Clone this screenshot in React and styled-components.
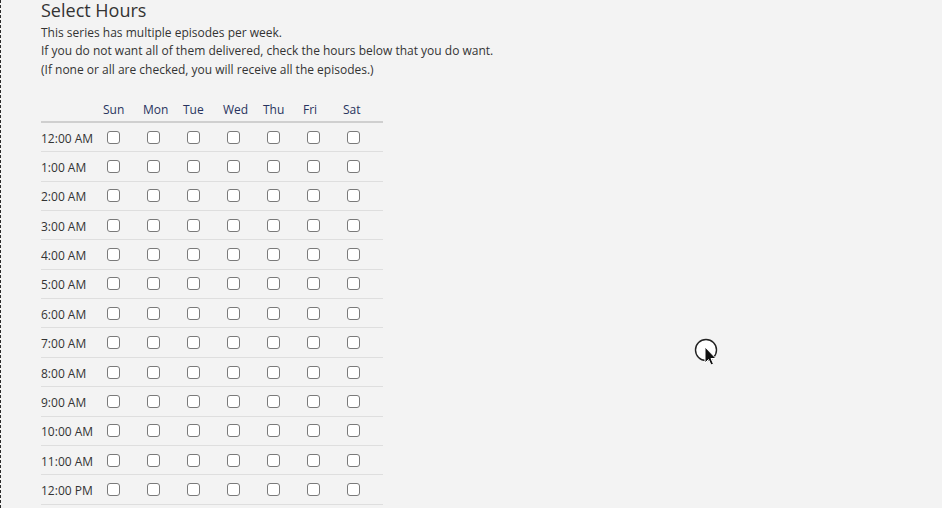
import styled, { createGlobalStyle } from "styled-components";

const GlobalStyle = createGlobalStyle`
    html, body {
        margin: 0;
        padding: 0;
        height: 100%;
        overflow: hidden;
        background: #f3f3f3;
    }
    body {
        font-family: "Open Sans", "Noto Sans", sans-serif;
        color: #333;
    }
`;

const Page = styled.div`
    position: relative;
    height: 508px;
    box-sizing: border-box;
    border-left: 1px dashed #2a2a2a;
    padding: 0 0 0 40px;
    overflow: hidden;
`;

const Title = styled.h2`
    margin: 0;
    font-size: 18px;
    font-weight: 400;
    line-height: 21px;
    color: #333;
`;

const Intro = styled.div`
    margin-top: 3px;
    font-size: 12px;
    line-height: 18.4px;
    color: #333;

    & p {
        margin: 0;
    }
`;

const Table = styled.table`
    margin-top: 15px;
    border-collapse: collapse;
    font-size: 12px;
`;

const HeadCell = styled.th`
    width: ${ ( p ) => p.$w }px;
    height: 24px;
    padding: 3px 0 0;
    text-align: left;
    font-weight: 400;
    color: #28335e;
    border-bottom: 2px solid #cfcfcf;
    vertical-align: middle;
`;

const Row = styled.tr`
    height: 29.4px;
    border-bottom: 1px solid #dedede;
`;

const TimeCell = styled.td`
    padding: 0;
    padding-top: 2px;
    white-space: nowrap;
    color: #333;
`;

const BoxCell = styled.td`
    padding: 0;
`;

const Box = styled.input.attrs( { type: "checkbox" } )`
    appearance: none;
    display: block;
    width: 13px;
    height: 13px;
    margin: 0 0 0 4px;
    box-sizing: border-box;
    border: 1px solid #7a7a7a;
    border-radius: 3px;
    background: #fff;
`;

const Cursor = styled.svg`
    position: absolute;
    left: 693px;
    top: 338px;
`;

const days = [ "Sun", "Mon", "Tue", "Wed", "Thu", "Fri", "Sat" ];

const hours = Array.from( { length: 24 }, ( _, i ) => {
    const h = i % 12 === 0 ? 12 : i % 12;
    return `${ h }:00 ${ i < 12 ? "AM" : "PM" }`;
} );

export default function App() {
    return (
        <>
            <GlobalStyle />
            <Page>
                <Title>Select Hours</Title>
                <Intro>
                    <p>This series has multiple episodes per week.</p>
                    <p>If you do not want all of them delivered, check the hours below that you do want.</p>
                    <p>(If none or all are checked, you will receive all the episodes.)</p>
                </Intro>
                <Table>
                    <thead>
                        <tr>
                            <HeadCell $w={ 62 } />
                            { days.map( ( d ) => (
                                <HeadCell key={ d } $w={ 40 }>{ d }</HeadCell>
                            ) ) }
                        </tr>
                    </thead>
                    <tbody>
                        { hours.map( ( h ) => (
                            <Row key={ h }>
                                <TimeCell>{ h }</TimeCell>
                                { days.map( ( d ) => (
                                    <BoxCell key={ d }>
                                        <Box aria-label={ `${ d } ${ h }` } />
                                    </BoxCell>
                                ) ) }
                            </Row>
                        ) ) }
                    </tbody>
                </Table>
                <Cursor width="26" height="30" viewBox="0 0 26 30">
                    <circle cx="12" cy="12" r="10.5" fill="#fff" stroke="#222" strokeWidth="1.4" />
                    <path d="M11 9 L11 25 L14.5 21.5 L17 27 L19.5 26 L17 20.5 L22 20.5 Z" fill="#111" stroke="#fff" strokeWidth="1" />
                </Cursor>
            </Page>
        </>
    );
}
